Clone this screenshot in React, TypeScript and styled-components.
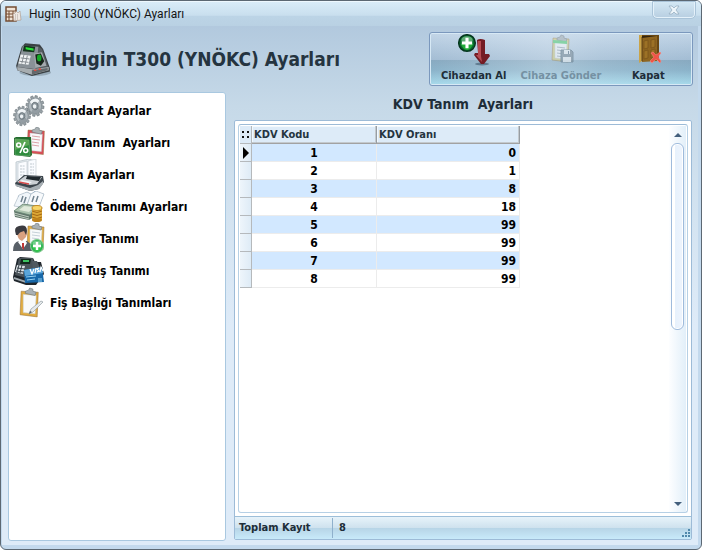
import React from "react";
import styled, { createGlobalStyle, css } from "styled-components";

const GlobalStyle = createGlobalStyle`
  * { box-sizing: border-box; }
  body { margin: 0; background: #fff; font-family: "DejaVu Sans Condensed", "Noto Sans", sans-serif; }
  button { font-family: inherit; }
`;

const Window = styled.div`
  display: flex;
  flex-direction: column;
  min-height: 100vh;
  border: 1px solid #5c6873;
  border-radius: 6px;
  background: #c3d9ed;
  overflow: hidden;
`;

const TitleBar = styled.header`
  display: flex;
  align-items: center;
  height: 25px;
  padding: 0 5px 0 4px;
  border-top: 1px solid #eef8fe;
  background: linear-gradient(#d9ecf8, #c9dfee 55%, #bcd4e6 60%, #b9d1e3);
`;

const WindowTitle = styled.span`
  flex: 1;
  padding-left: 7px;
  font: 12px/18px Roboto, sans-serif;
  color: #151515;
`;

const CloseButton = styled.button`
  align-self: flex-start;
  display: grid;
  place-items: center;
  width: 42px;
  height: 16px;
  margin-right: 1px;
  padding: 0;
  border: 1px solid #e4f1fa;
  border-top: 0;
  border-radius: 0 0 4px 4px;
  outline: 1px solid #a9c3d8;
  background: linear-gradient(#d3e7f4, #b9d0e2);
`;

const Body = styled.div`
  flex: 1;
  display: flex;
  flex-direction: column;
  margin: 0 3px 4px 1px;
  padding: 6px 5px 4px 6px;
  background: linear-gradient(#b2c9de, #c6d9e8 80px, #d0e1ef 160px, #deebf8 300px);
`;

const Banner = styled.div`
  display: flex;
  justify-content: space-between;
  align-items: flex-start;
  height: 60px;
`;

const Heading = styled.h1`
  display: flex;
  align-items: center;
  gap: 10px;
  height: 54px;
  margin: 0;
  padding-left: 7px;
  font-size: 19px;
  line-height: 24px;
  color: #253440;
`;

const Toolbar = styled.div`
  display: grid;
  grid-template-columns: repeat(3, 1fr);
  width: 264px;
  height: 54px;
  border: 1px solid #7b98bd;
  border-radius: 3px;
  box-shadow: inset 0 0 0 1px #d7e9f5;
  background:
    linear-gradient(90deg, #8ba7c100 0%, #e9f2f955 45%, #dbeaf433 65%, #8ba7c100 100%),
    linear-gradient(#c2d5e7, #a3bdd4 51%, #88a9c0 52%, #8bb3ca 72%, #a7dbec);
`;

const ToolButton = styled.button`
  display: flex;
  flex-direction: column;
  align-items: center;
  gap: 2px;
  padding: 1px 0 0;
  border: 0;
  background: none;
  font-size: 11px;
  font-weight: bold;
  line-height: 16px;
  white-space: nowrap;
  color: #202d38;
  &:disabled { color: #7591a3; }
`;

const Columns = styled.div`
  flex: 1;
  display: flex;
  gap: 8px;
`;

const Sidebar = styled.nav`
  width: 218px;
  padding-top: 2px;
  border: 1px solid #a9c8e0;
  border-radius: 3px;
  background: #fff;
`;

const NavItem = styled.button`
  display: flex;
  align-items: center;
  gap: 5px;
  width: 100%;
  height: 32px;
  padding: 0 4px;
  border: 0;
  background: none;
  font-size: 12px;
  font-weight: bold;
  line-height: 16px;
  color: #000;
  white-space: pre;
`;

const Main = styled.main`
  flex: 1;
  display: flex;
  flex-direction: column;
  padding: 0 1px 1px 0;
`;

const SectionTitle = styled.h2`
  margin: 0;
  padding-top: 2px;
  height: 28px;
  font-size: 14px;
  line-height: 20px;
  text-align: center;
  white-space: pre;
  color: #202d38;
`;

const Frame = styled.section`
  flex: 1;
  display: flex;
  flex-direction: column;
  border: 1px solid #9dbbd7;
  border-radius: 2px;
  background: #fff;
`;

const GridBox = styled.div`
  flex: 1;
  display: flex;
  justify-content: space-between;
  margin: 3px;
  padding: 1px 1px 0 1px;
  border: 1px solid #b6d0e5;
  border-top-color: #9dbbd7;
  border-radius: 3px;
`;

const Table = styled.table`
  align-self: flex-start;
  table-layout: fixed;
  width: 280px;
  border-collapse: separate;
  border-spacing: 0;
  font-size: 12px;
  font-weight: bold;
  line-height: 16px;
`;

const ColumnHead = styled.th`
  height: 18px;
  padding: 0 2px;
  border-right: 1px solid #979da3;
  border-bottom: 1px solid #a2a2a2;
  box-shadow: inset -1px -1px #c3c9ce, inset 1px 1px #f2f9fe;
  background: #ddebf8;
  text-align: left;
  font-size: 11px;
  color: #253440;
`;

const gutter = css`
  height: 18px;
  padding: 0;
  border-right: 1px solid #b5b9bc;
  border-bottom: 1px solid #b5b9bc;
  line-height: 0;
  text-align: center;
`;

const GutterHead = styled.th`
  ${gutter}
  background: #ddebf8;
`;

const GutterCell = styled.td`
  ${gutter}
  background: linear-gradient(90deg, #eef5fb, #deebf6);
`;

const Cell = styled.td<{ $striped: boolean; $align: "center" | "right" }>`
  height: 18px;
  padding: 0 3px;
  border-right: 1px solid #ececec;
  border-bottom: 1px solid #ececec;
  background: ${(p) => (p.$striped ? "#d2e8ff" : "#fff")};
  text-align: ${(p) => p.$align};
  color: #000;
`;

const ScrollBar = styled.div`
  display: flex;
  flex-direction: column;
  width: 17px;
  background: linear-gradient(90deg, #fdfeff, #e2eff9);
`;

const ScrollArrow = styled.button`
  display: grid;
  place-items: center;
  height: 17px;
  padding: 0;
  border: 0;
  background: none;
`;

const Track = styled.div`
  flex: 1;
  padding: 0 2px;
`;

const Thumb = styled.div`
  height: 53%;
  border: 1px solid #9fbbdc;
  border-radius: 6px;
  box-shadow: inset 0 0 0 1px #fff;
  background: linear-gradient(90deg, #fff 25%, #e7f1fc 30%, #edf4fd);
`;

const StatusBar = styled.footer`
  display: flex;
  align-items: center;
  height: 23px;
  border-top: 1px solid #9dbfd9;
  background: linear-gradient(#e7f3fa, #cfe2ee 48%, #b7d4e6 50%, #c8eafa);
  font-size: 11px;
  font-weight: bold;
  line-height: 16px;
  color: #202d38;
`;

const StatusLabel = styled.span`
  width: 98px;
  padding: 2px 0 2px 4px;
  border-right: 1px solid #8fb0cc;
`;

const StatusValue = styled.span`
  flex: 1;
  padding-left: 6px;
`;

const Grip = styled.svg`
  align-self: flex-end;
  margin: 0 1px 1px 0;
`;

const gearTeeth = Array.from({ length: 12 }, (_, i) => i * 30);

const Gear = ({ x, y, s }: { x: number; y: number; s: number }) => (
  <g transform={`translate(${x} ${y}) scale(${s} ${s * 1.15}) rotate(8)`}>
    {gearTeeth.map((angle) => (
      <path key={angle} transform={`rotate(${angle})`} d="M-1.2-9.6h2.4L1.7-6h-3.4z" fill="#98a1a6" stroke="#626c72" strokeWidth=".5" />
    ))}
    <circle r="7" fill="#b2babf" stroke="#858f95" strokeWidth=".7" />
    <path d="M-6-3A6.6 6.6 0 0 1 4-5.5L2-3A4 4 0 0 0-3-1z" fill="#eff3f5" />
    <path d="M6 3A6.6 6.6 0 0 1-3 6l1-3A4 4 0 0 0 4 1z" fill="#808b91" opacity=".6" />
    <circle r="3.4" fill="#8b969c" stroke="#626d74" strokeWidth=".7" />
    <circle cx="-.4" cy=".4" r="1.9" fill="#eef2f4" />
  </g>
);

const Clipboard = ({ x = 0, y = 0, frame = "#e0ab40", s = 1 }: { x?: number; y?: number; frame?: string; s?: number }) => (
  <g transform={`translate(${x} ${y}) scale(${s})`}>
    <path d="m2 3 16 1-1 23L1 25z" fill={frame} stroke="#96713b" strokeWidth=".5" />
    <path d="m4 6 12 1-1 17-11-1z" fill="#f8fafb" stroke="#cad3da" strokeWidth=".5" />
    <path d="M6 5V3l3-1 1-2 3 1v2l3 1-1 3z" fill="#aab1b4" stroke="#707b81" strokeWidth=".6" />
  </g>
);

const Lines = ({ x, y, color = "#b8c5cf" }: { x: number; y: number; color?: string }) => (
  <path transform={`translate(${x} ${y})`} d="m0 0 8 1M0 3l8 1M0 6l7 1M0 9l7 1" stroke={color} strokeWidth=".8" />
);

const Plus = ({ x, y, r, dark = false }: { x: number; y: number; r: number; dark?: boolean }) => (
  <g transform={`translate(${x} ${y}) scale(${r / 8})`}>
    <circle r="8" fill={dark ? "#086b2b" : "#2cb052"} stroke={dark ? "#06361f" : "#7ccb8c"} strokeWidth="1.4" />
    <ellipse cy="-3" rx="5.5" ry="3.5" fill="#b6f0c2" opacity=".5" />
    <path d="M-6 1Q0-2 6 1Q4 6 0 7Q-4 6-6 1" fill="#39de45" opacity=".55" />
    <path d="M-1.5-5h3v3.5H5v3H1.5V5h-3V1.5H-5v-3h3.5z" fill="#fff" />
  </g>
);

const drawings: Record<string, React.ReactNode> = {
  device: (
    <>
      <ellipse cx="18" cy="28" rx="14" ry="3" fill="#50606b" opacity=".35" />
      <path d="M6 5 9 2l13 1 3 4 6 17v3l-16 4L2 26l-1-4z" fill="#3b4145" />
      <path d="m7 4 14 1-2 20L2 23z" fill="#899197" />
      <path d="m21 5 3 2 6 17-12 2z" fill="#565d62" />
      <path d="m17 11 7-1 4 12-10 2z" fill="#a3a9ad" />
      <path d="m2 23 14 2 14-2v3l-15 4-13-4z" fill="#a7adb0" />
      <path d="m8 4 10 1-1 5-10-1z" fill="#14351d" />
      <path d="m10 6 6 1v1l-6-1z" fill="#2be33a" strokeWidth="1" stroke="#2be33a" />
      <path d="m5 12 9 1-2 8-9-1z" fill="#f0f3f4" />
      <path d="m5 15 8 1M4 18l8 1M8 12l-2 8M11 13l-2 8" stroke="#7e858a" strokeWidth=".8" />
      <path d="m18 12 5-1 3 7-3 4-4-2z" fill="#17251b" />
      <ellipse cx="21.5" cy="15" rx="2" ry="3" fill="#16a927" />
      <path d="m15 26 14-2v2l-14 4z" fill="#64696c" />
      <path d="M17 26h2m2-1h2" stroke="#e24b40" strokeWidth="1.5" />
    </>
  ),
  gears: (
    <>
      <Gear x={22} y={11} s={0.94} />
      <Gear x={9} y={21} s={0.88} />
    </>
  ),
  tax: (
    <>
      <Clipboard x={13} y={0} frame="#d94e5a" s={1.02} />
      <Lines x={19} y={9} color="#d68b93" />
      <path d="m1 11 2-1 15 0 1 18-2 2-16-2z" fill="#246c2e" />
      <path d="m2 12 14 1 1 16-15-1z" fill="#2e8c3d" stroke="#72a979" strokeWidth=".6" />
      <path d="m2 12 14 1v5L2 23z" fill="#7dba66" opacity=".55" />
      <path d="m12 15-5 11" stroke="#fff" strokeWidth="1.7" />
      <circle cx="5.7" cy="18" r="2" fill="none" stroke="#fff" strokeWidth="1.6" />
      <circle cx="12.7" cy="23.5" r="2" fill="none" stroke="#fff" strokeWidth="1.6" />
    </>
  ),
  section: (
    <>
      <path d="m3 3 13-3 6 2v20H3z" fill="#e5ecf0" stroke="#b2bdc4" strokeWidth=".7" />
      <path d="m5 4 9-2v22H5z" fill="#fafcff" stroke="#c4cdd3" strokeWidth=".7" />
      <path d="m15 2 8-2v19l-8 3z" fill="#fafcff" stroke="#c4cdd3" strokeWidth=".7" />
      <path d="M7 7h5M7 10h5M7 13h5M7 16h5m5-11h4m-4 3h4m-4 3h4m-4 3h4" stroke="#c0c9cf" strokeWidth="1" strokeDasharray="2 .6" />
      <path d="m2 24 9-8 19 1 1 6-5 7-9 2-14-5z" fill="#3d464d" />
      <path d="m4 23 8-6 17 1-5 7-7 1z" fill="#cbd0d4" />
      <path d="m14 17 14 1-2 4-13-2z" fill="#1e272c" />
      <path d="m9 21 10 2-3 2-10-2z" fill="#f2f6f8" />
      <path d="m6 23 10 2" stroke="#d64b4b" strokeWidth="1.3" />
      <path d="m2 25 15 4 8-3 5-4v3l-4 5-9 2-14-5z" fill="#a8b0b5" />
    </>
  ),
  payment: (
    <>
      <path d="m5 5 9-4 4 2 4-3 9 3-5 13-21 1z" fill="#6d93b8" />
      <path d="m6 4 8-3 4 2-5 14-12-2z" fill="#f1f6fa" stroke="#a4b4bf" strokeWidth=".6" />
      <path d="m18 3 5-3 8 3-5 13-13 1z" fill="#f8fafc" stroke="#a4b4bf" strokeWidth=".6" />
      <path d="m10 5-2 6m5-5-2 6m10-7-2 6m6-6-2 6" stroke="#71838f" strokeWidth="1.5" />
      <path d="m1 20 9-7 14 2 0 9-8 5-14-3z" fill="#61776b" />
      <path d="m1 20 9-7 14 2-7 9z" fill="#acc3ae" stroke="#678472" strokeWidth=".7" />
      <path d="m6 19 5-4 10 1-5 5z" fill="#e0eadb" />
      <path d="m1 22 15 4m-15-2 15 4" stroke="#d7e1d5" strokeWidth=".8" />
      <path d="M19 17h10v12H19z" fill="#dba737" />
      <path d="M19 20q5 3 10 0m-10 3q5 3 10 0m-10 3q5 3 10 0" fill="none" stroke="#a66914" />
      <ellipse cx="24" cy="29" rx="5" ry="2" fill="#be821c" />
      <ellipse cx="24" cy="17" rx="5" ry="2.5" fill="#f7d567" stroke="#c28a25" />
    </>
  ),
  cashier: (
    <>
      <Clipboard x={13} y={0} />
      <Lines x={19} y={9} />
      <path d="M0 28q0-9 6-10l8 0 5 4v6z" fill="#596067" />
      <path d="m5 19 5 7 4-6-2-3-5 0z" fill="#fff" />
      <path d="m9 20 2 0v7l-2-2z" fill="#c03736" />
      <path d="M4 9Q5 3 11 5q5 2 2 9l-4 4q-5-2-5-9" fill="#d9a180" />
      <path d="M3 12Q0 4 6 3q8-2 8 5l-1 4-2-4q-5 1-6 4z" fill="#3b3b40" />
      <Plus x={24} y={23} r={6.5} />
    </>
  ),
  credit: (
    <>
      <path d="M0 22 4 4l3-2 13 1 2 4h6l3 12-8 11-10 0-12-4z" fill="#20272d" />
      <path d="m6 3 14 0 1 11-3 10-16-4z" fill="#4a5359" />
      <path d="m8 4 10 0-1 5-10 0z" fill="#12271b" />
      <path d="M10 5h6v2h-6z" fill="#3dc25f" />
      <path d="m4 10 8 1-2 8-8-2z" fill="#dce2e5" />
      <path d="m4 13 8 1m-9 2 8 1M6 10l-2 8m5-8-2 8" stroke="#3a444c" />
      <path d="m19 6 5 0 3 7-7 2z" fill="#515a60" />
      <path d="m1 22 12 4v2L1 24z" fill="#a2acb2" />
      <path d="m11 15 18-3 2 15-19 1z" fill="#1768a9" />
      <path d="m11 15 18-3 1 6-18 3z" fill="#5ba6da" />
      <path d="m17 14 2 5 2-5m2-1-1 5m4-5-2 1 2 2-2 1m3 0 1-5 2 4" fill="none" stroke="#fff" strokeWidth="1.2" />
      <path d="m13 22 10-1m2 3h4m-4 2h4m-15-1 8-1" stroke="#94d1f1" strokeWidth="1" />
    </>
  ),
  receipt: (
    <>
      <Clipboard x={6} y={1} s={1.07} />
      <path d="m16 27 2-5 10-8 2 1-10 10z" fill="#e6eaec" stroke="#929da4" strokeWidth=".7" />
      <path d="m16 27 1-3 2 1z" fill="#555d63" />
    </>
  ),
  fetch: (
    <>
      <ellipse cx="24" cy="30" rx="7" ry="1.5" fill="#3d5569" opacity=".6" />
      <path d="M19 6q3-2 8 0v14h4l1 2-6 8h-3l-7-9 1-2h3z" fill="#741c24" />
      <path d="M20 7h3v15l1 6-6-7h2z" fill="#c2545a" opacity=".85" />
      <Plus x={9} y={9} r={8.3} dark />
    </>
  ),
  send: (
    <g opacity=".58">
      <Clipboard x={6} y={1} frame="#d5cf86" />
      <path d="m8 6 14 1v3L8 9z" fill="#5bd07a" />
      <Lines x={12} y={13} color="#8998a3" />
      <path d="M16 16h10l2 2v10H16z" fill="#7e8e99" stroke="#637887" />
      <path d="M19 16h6v4h-6zM18 23h8v5h-8z" fill="#eef2f4" />
      <path d="M23 17h1v3h-1z" fill="#5e7384" />
    </g>
  ),
  close: (
    <>
      <path d="M7 1h20v25H7z" fill="#694712" />
      <path d="M9 2h16v23H9z" fill="#32230d" />
      <path d="m10 4 15-2v25l-15 1z" fill="#8e6520" />
      <path d="m12 7 4-1v8l-4 1zm7-1 4-1v8l-4 1zm-7 11 4-1v8l-4 1zm7-1 4-1v8l-4 1z" fill="#9c7125" stroke="#76511a" strokeWidth=".7" />
      <path d="M7 1h3v26l-3 2z" fill="#c9a349" />
      <path d="M10 3v24" stroke="#49300f" strokeWidth=".8" />
      <path d="m19 19 2-1 3 3 4-3 1 1-3 4 3 4-1 2-4-4-4 4-2-2 4-4z" fill="#ef5448" stroke="#ff8f83" strokeWidth=".5" />
    </>
  ),
};

const Icon = ({ name, size = 32 }: { name: string; size?: number }) => (
  <svg width={size} height={size} viewBox="0 0 32 32" aria-hidden="true">
    {drawings[name]}
  </svg>
);

const navigation = [
  { icon: "gears", label: "Standart Ayarlar" },
  { icon: "tax", label: "KDV Tanım  Ayarları" },
  { icon: "section", label: "Kısım Ayarları" },
  { icon: "payment", label: "Ödeme Tanımı Ayarları" },
  { icon: "cashier", label: "Kasiyer Tanımı" },
  { icon: "credit", label: "Kredi Tuş Tanımı" },
  { icon: "receipt", label: "Fiş Başlığı Tanımları" },
];

const rates = [0, 1, 8, 18, 99, 99, 99, 99];

export default function App() {
  return (
    <>
      <GlobalStyle />
      <Window>
        <TitleBar>
          <svg width="17" height="17" viewBox="0 0 17 17" aria-hidden="true">
            <path d="M1 1h10v14H1z" fill="#f1e4d6" stroke="#744d33" strokeWidth="1.5" />
            <path d="M1 5h10M1 8h10M1 11h10M4 5v10M8 5v10" stroke="#744d33" />
            <path d="m8 8 2-1 1-2 2 2 2-2 1 9-7 1z" fill="#eee8e3" stroke="#aa9484" strokeWidth=".6" />
            <path d="M10 9h4m-4 2h4m-4 2h4" stroke="#b1a79f" strokeDasharray="1 1" />
          </svg>
          <WindowTitle>Hugin T300 (YNÖKC) Ayarları</WindowTitle>
          <CloseButton aria-label="Pencereyi kapat">
            <svg width="12" height="10" viewBox="0 0 12 10" aria-hidden="true">
              <path d="M1 1h3l2 2 2-2h3L8 5l3 4H8L6 7 4 9H1l3-4z" fill="#edf5fa" stroke="#91a9bb" strokeWidth=".7" />
            </svg>
          </CloseButton>
        </TitleBar>
        <Body>
          <Banner>
            <Heading>
              <Icon name="device" size={36} />
              Hugin T300 (YNÖKC) Ayarları
            </Heading>
            <Toolbar role="toolbar">
              <ToolButton><Icon name="fetch" />Cihazdan Al</ToolButton>
              <ToolButton disabled><Icon name="send" />Cihaza Gönder</ToolButton>
              <ToolButton><Icon name="close" />Kapat</ToolButton>
            </Toolbar>
          </Banner>
          <Columns>
            <Sidebar>
              {navigation.map((item) => (
                <NavItem key={item.icon}><Icon name={item.icon} />{item.label}</NavItem>
              ))}
            </Sidebar>
            <Main>
              <SectionTitle>KDV Tanım  Ayarları</SectionTitle>
              <Frame>
                <GridBox>
                  <Table>
                    <colgroup>
                      <col width="12" />
                      <col width="125" />
                      <col width="143" />
                    </colgroup>
                    <thead>
                      <tr>
                        <GutterHead>
                          <svg width="10" height="10" viewBox="0 0 10 10" aria-hidden="true">
                            <path d="M1 1h2v2H1zm5 0h2v2H6zM1 6h2v2H1zm5 0h2v2H6z" fill="#111" />
                          </svg>
                        </GutterHead>
                        <ColumnHead scope="col">KDV Kodu</ColumnHead>
                        <ColumnHead scope="col">KDV Oranı</ColumnHead>
                      </tr>
                    </thead>
                    <tbody>
                      {rates.map((rate, index) => (
                        <tr key={index}>
                          <GutterCell>
                            {index === 0 && (
                              <svg width="8" height="12" viewBox="0 0 8 12" aria-hidden="true">
                                <path d="m1 0 6 6-6 6z" fill="#000" />
                              </svg>
                            )}
                          </GutterCell>
                          <Cell $striped={index % 2 === 0} $align="center">{index + 1}</Cell>
                          <Cell $striped={index % 2 === 0} $align="right">{rate}</Cell>
                        </tr>
                      ))}
                    </tbody>
                  </Table>
                  <ScrollBar>
                    <ScrollArrow aria-label="Yukarı">
                      <svg width="8" height="4" viewBox="0 0 8 4"><path d="m0 4 4-4 4 4z" fill="#435f7c" /></svg>
                    </ScrollArrow>
                    <Track><Thumb /></Track>
                    <ScrollArrow aria-label="Aşağı">
                      <svg width="8" height="4" viewBox="0 0 8 4"><path d="m0 0 4 4 4-4z" fill="#435f7c" /></svg>
                    </ScrollArrow>
                  </ScrollBar>
                </GridBox>
                <StatusBar>
                  <StatusLabel>Toplam Kayıt</StatusLabel>
                  <StatusValue>8</StatusValue>
                  <Grip width="9" height="9" viewBox="0 0 9 9" aria-hidden="true">
                    <path d="M7 0h2v2H7zM4 3h2v2H4zm3 0h2v2H7zM1 6h2v2H1zm3 0h2v2H4zm3 0h2v2H7z" fill="#4f88ab" />
                  </Grip>
                </StatusBar>
              </Frame>
            </Main>
          </Columns>
        </Body>
      </Window>
    </>
  );
}
